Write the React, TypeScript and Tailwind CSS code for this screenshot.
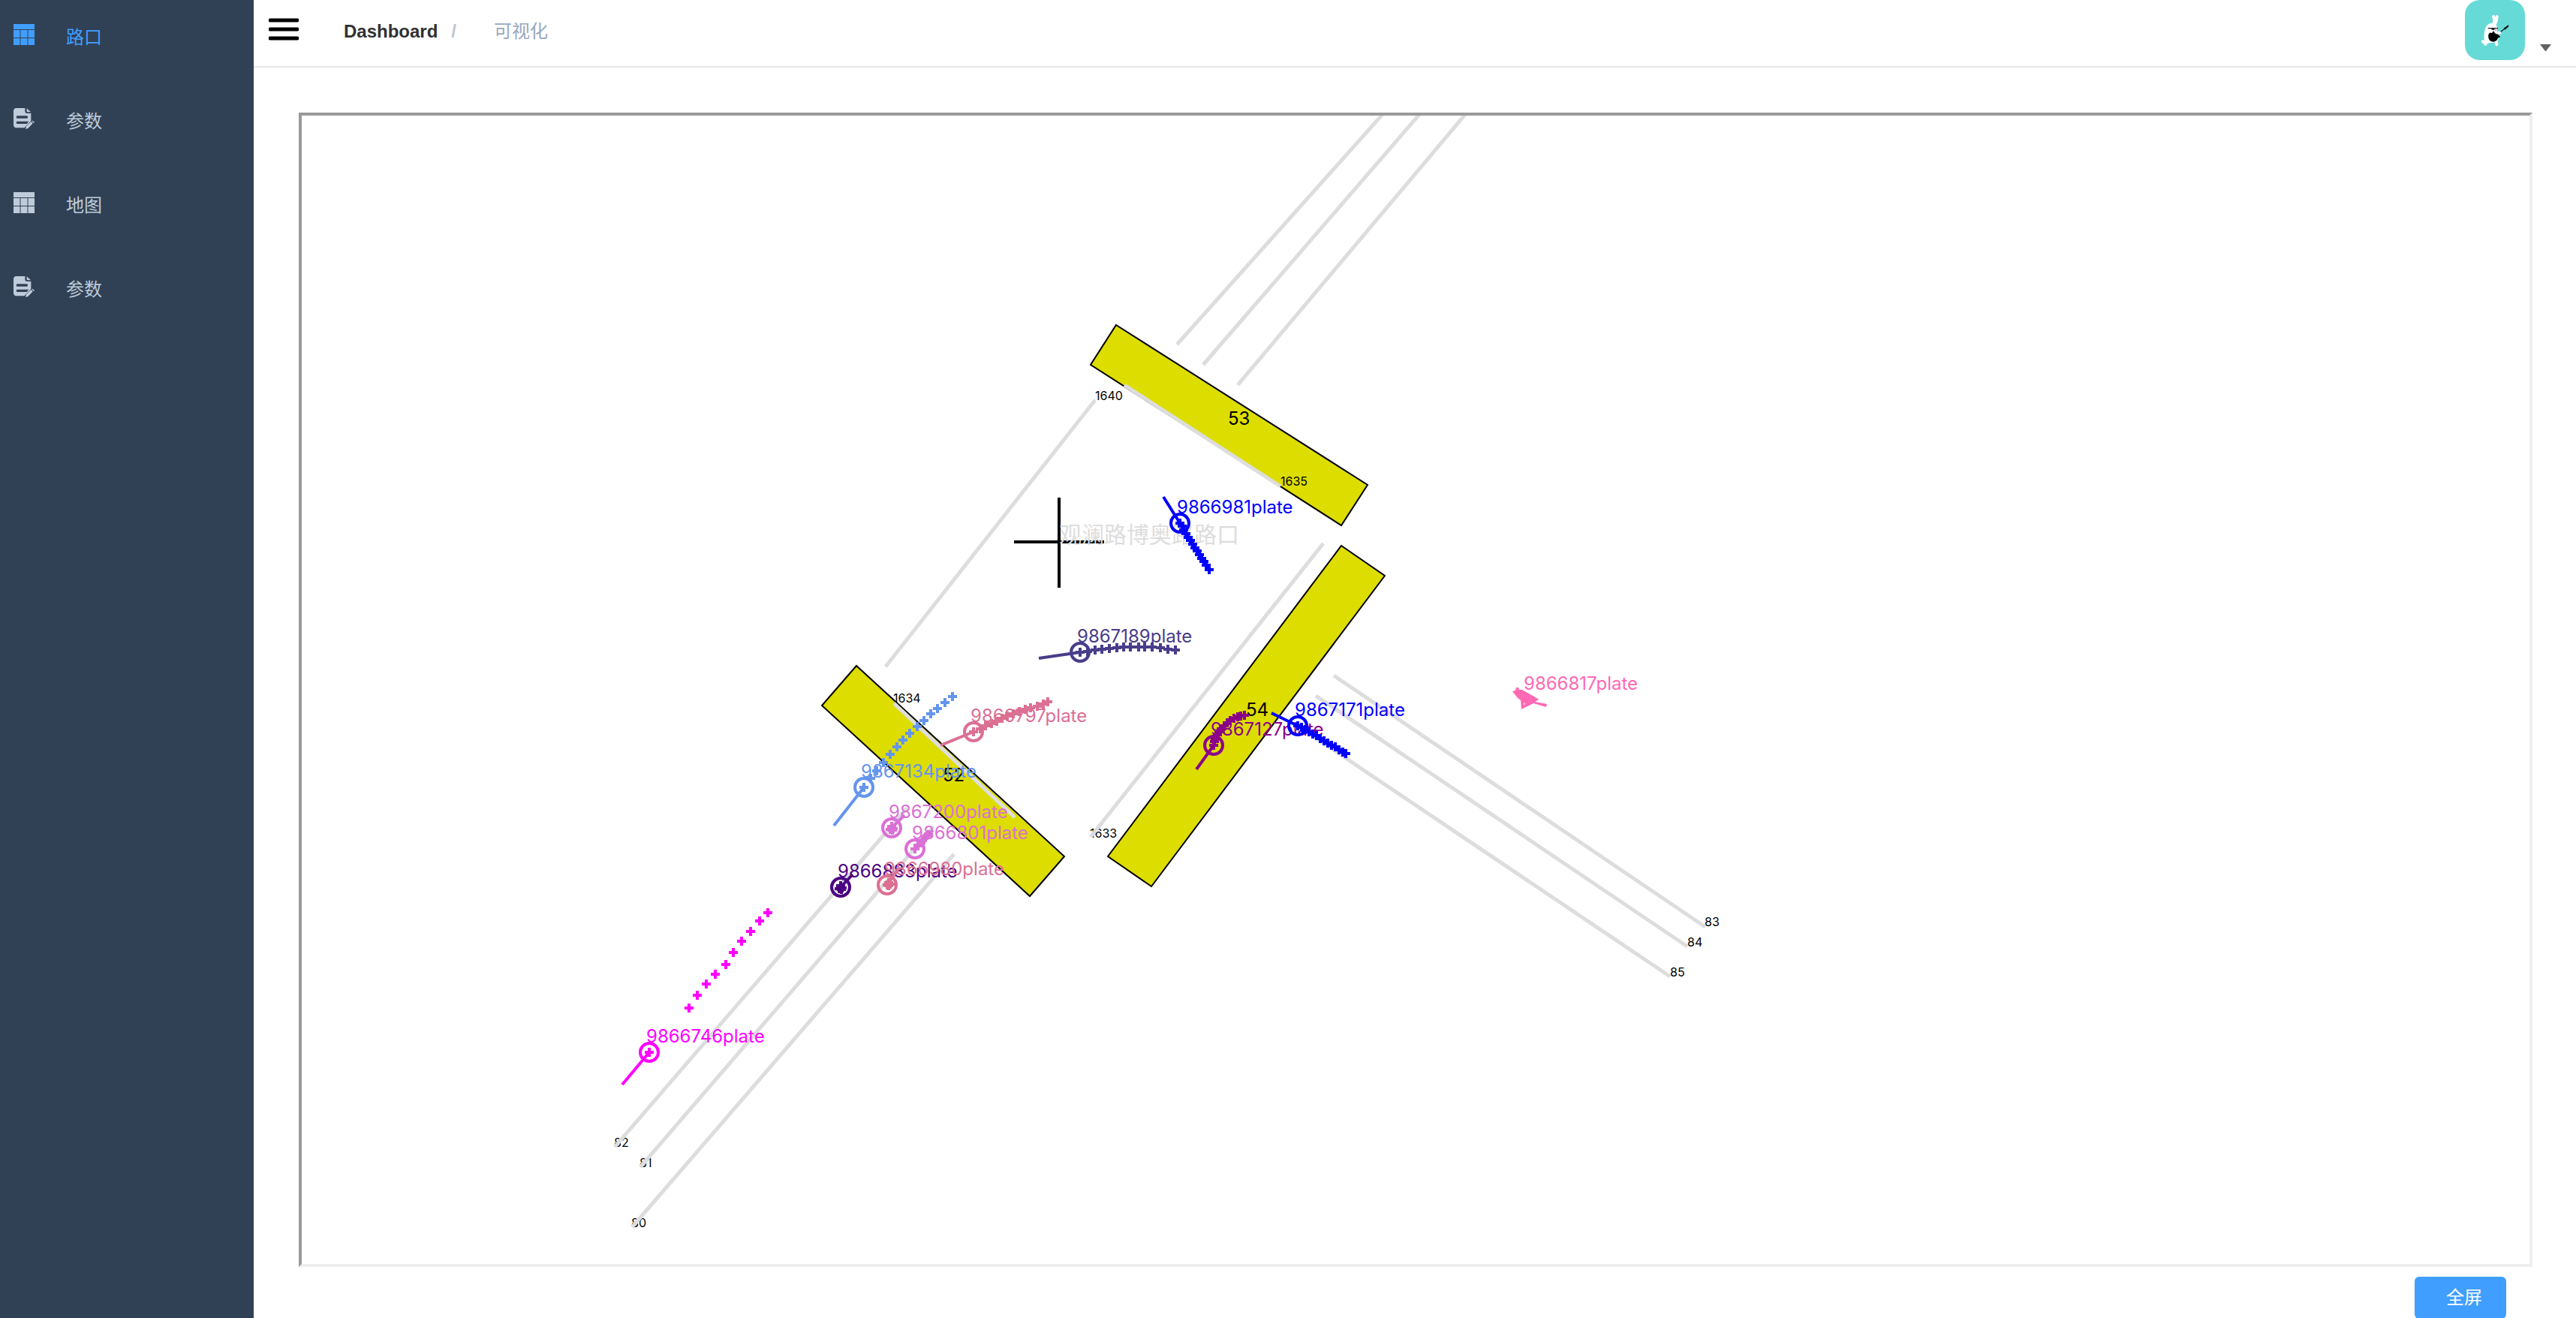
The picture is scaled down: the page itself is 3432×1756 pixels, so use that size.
import React from "react";

type Point = [number, number];

type Vehicle = {
  label: string;
  color: string;
  at: Point;
  heading?: Point;
  trail: Point[];
};

const CJK = "font-['Liberation_Sans','Noto_Sans_CJK_SC',sans-serif]";

const stopLines: { name: string; points: string; label: Point }[] = [
  { name: "53", points: "1487,433 1822,646 1787,700 1453,486", label: [1636, 566] },
  { name: "54", points: "1787,727 1845,767 1534,1181 1476,1141", label: [1660, 954] },
  { name: "52", points: "1141,887 1418,1141 1372,1194 1095,940", label: [1256, 1041] },
];

const lanes: [number, number, number, number][] = [
  [1568, 459, 1845, 149],
  [1603, 486, 1894, 149],
  [1649, 513, 1955, 149],
  [1498, 513, 1706, 648],
  [1459, 533, 1180, 888],
  [1763, 724, 1453, 1115],
  [1191, 937, 1352, 1089],
  [1777, 900, 2272, 1235],
  [1753, 927, 2248, 1261],
  [1729, 967, 2225, 1301],
  [819, 1528, 1208, 1077],
  [853, 1555, 1244, 1101],
  [842, 1635, 1271, 1138],
];

const laneLabels: [string, number, number][] = [
  ["1640", 1459, 533],
  ["1635", 1706, 647],
  ["1634", 1190, 936],
  ["1633", 1452, 1116],
  ["82", 818, 1528],
  ["81", 852, 1555],
  ["80", 841, 1635],
  ["83", 2271, 1234],
  ["84", 2248, 1261],
  ["85", 2225, 1301],
];

const vehicles: Vehicle[] = [
  {
    label: "9866746plate",
    color: "#ff00ff",
    at: [865, 1402],
    heading: [829, 1445],
    trail: [[865, 1402], [918, 1343], [929, 1326], [941, 1311], [953, 1298], [967, 1285], [977, 1269], [988, 1254], [1000, 1241], [1012, 1227], [1023, 1216]],
  },
  {
    label: "9866981plate",
    color: "#0000ff",
    at: [1572, 697],
    heading: [1550, 662],
    trail: [[1572, 697], [1575, 701], [1577, 706], [1580, 711], [1583, 716], [1586, 720], [1589, 725], [1592, 730], [1595, 734], [1598, 739], [1601, 744], [1604, 748], [1607, 753], [1611, 759]],
  },
  {
    label: "9867189plate",
    color: "#483d8b",
    at: [1439, 869],
    heading: [1384, 877],
    trail: [[1439, 869], [1449, 868], [1459, 866], [1468, 865], [1478, 864], [1488, 863], [1497, 862], [1506, 862], [1517, 862], [1525, 862], [1535, 862], [1546, 863], [1556, 865], [1566, 866]],
  },
  {
    label: "9866797plate",
    color: "#db7093",
    at: [1297, 975],
    heading: [1253, 993],
    trail: [[1297, 975], [1306, 971], [1313, 967], [1321, 964], [1328, 961], [1335, 957], [1342, 954], [1350, 951], [1358, 948], [1366, 945], [1373, 943], [1382, 941], [1390, 938], [1396, 935]],
  },
  {
    label: "9867134plate",
    color: "#6495ed",
    at: [1151, 1049],
    heading: [1111, 1100],
    trail: [[1151, 1049], [1160, 1037], [1168, 1027], [1177, 1016], [1186, 1005], [1195, 995], [1203, 986], [1212, 977], [1222, 968], [1231, 960], [1240, 951], [1249, 944], [1259, 936], [1269, 928]],
  },
  {
    label: "9867200plate",
    color: "#da70d6",
    at: [1188, 1103],
    heading: [1205, 1086],
    trail: [[1188, 1103], [1186, 1105], [1190, 1104], [1188, 1101], [1189, 1106]],
  },
  {
    label: "9866801plate",
    color: "#da70d6",
    at: [1219, 1131],
    heading: [1243, 1106],
    trail: [[1219, 1131], [1223, 1126], [1227, 1123], [1229, 1120], [1233, 1115], [1235, 1113], [1237, 1112]],
  },
  {
    label: "9866883plate",
    color: "#4b0082",
    at: [1120, 1182],
    heading: [1136, 1165],
    trail: [[1120, 1182], [1118, 1184], [1122, 1183], [1120, 1180], [1121, 1185]],
  },
  {
    label: "9866980plate",
    color: "#db7093",
    at: [1182, 1179],
    heading: [1197, 1157],
    trail: [[1182, 1179], [1184, 1180], [1186, 1178], [1184, 1176]],
  },
  {
    label: "9867127plate",
    color: "#8b008b",
    at: [1617, 993],
    heading: [1594, 1025],
    trail: [[1617, 993], [1618, 988], [1619, 984], [1622, 979], [1624, 975], [1627, 971], [1631, 967], [1635, 963], [1639, 960], [1644, 957], [1649, 955], [1653, 954], [1658, 953]],
  },
  {
    label: "9867171plate",
    color: "#0000ff",
    at: [1729, 967],
    heading: [1694, 950],
    trail: [[1729, 967], [1734, 969], [1739, 972], [1744, 975], [1749, 978], [1754, 980], [1759, 984], [1764, 987], [1769, 990], [1774, 993], [1779, 995], [1784, 999], [1789, 1002], [1793, 1004]],
  },
];

function VehicleMark({ label, color, at, heading, trail }: Vehicle) {
  const [x, y] = at;
  return (
    <g stroke={color} fill="none" strokeWidth={4}>
      {heading && <line x1={x} y1={y} x2={heading[0]} y2={heading[1]} />}
      {trail.map(([tx, ty], i) => (
        <path key={i} d={`M${tx - 6} ${ty}h12M${tx} ${ty - 6}v12`} />
      ))}
      <circle cx={x} cy={y} r={12} />
      <text x={x - 4} y={y - 13} fill={color} stroke="none" className="text-[24px]">
        {label}
      </text>
    </g>
  );
}

function IntersectionMap() {
  return (
    <svg
      viewBox="402 154 2968 1530"
      className="block h-full w-full font-['Inter','Noto_Sans_CJK_SC',sans-serif]"
      role="img"
      aria-label="观澜路博奥路路口"
    >
      {stopLines.map((s) => (
        <g key={s.name}>
          <polygon points={s.points} fill="#dddd00" stroke="#000" strokeWidth={2} />
          <text x={s.label[0]} y={s.label[1]} className="text-[24px]">
            {s.name}
          </text>
        </g>
      ))}
      {laneLabels.map(([name, x, y]) => (
        <text key={name} x={x} y={y} className="text-[16px]">
          {name}
        </text>
      ))}
      <g stroke="#dddddd" strokeWidth={5}>
        {lanes.map(([x1, y1, x2, y2], i) => (
          <line key={i} x1={x1} y1={y1} x2={x2} y2={y2} />
        ))}
      </g>
      <path d="M1351 722H1471M1411 663V783" stroke="#000" strokeWidth={4} />
      <text x={1411} y={723} fill="#dddddd" className="text-[30px]">
        观澜路博奥路路口
      </text>
      {vehicles.map((v) => (
        <VehicleMark key={v.label} {...v} />
      ))}
      <g fill="#ff69b4">
        <path
          fillRule="evenodd"
          d="M2015 921L2019 920L2020 916L2023 916L2024 919L2028 919L2049 931L2050 932L2045 935L2061 938L2060 942L2043 937L2027 945L2026 933L2022 930ZM2030 936L2030 939L2032 938Z"
        />
        <text x={2030} y={919} className="text-[24px]">
          9866817plate
        </text>
      </g>
    </svg>
  );
}

function GridIcon() {
  return (
    <svg viewBox="0 0 28 28" className="size-7 shrink-0" fill="currentColor" aria-hidden="true">
      <path d="M0 0h28v7H0zM0 8h8v10H0zM10 8h8v10h-8zM20 8h8v10h-8zM0 19h8v9H0zM10 19h8v9h-8zM20 19h8v9h-8z" />
      <path d="M8 8h2v10H8zM18 8h2v10h-2zM8 19h2v9H8zM18 19h2v9h-2z" opacity="0.5" />
    </svg>
  );
}

function FormIcon() {
  return (
    <svg viewBox="0 0 84 84" className="size-7 shrink-0" fill="currentColor" aria-hidden="true">
      <path
        fillRule="evenodd"
        d="M12 0H46V12Q46 21 55 21H70V51L46 76L44 79H12Q0 79 0 67V12Q0 0 12 0ZM15 31Q11 31 11 36Q11 41 15 41H53Q57 41 57 36Q57 31 53 31ZM15 53Q11 53 11 58Q11 63 15 63H53L61 53Z"
      />
      <path d="M53 1L69 16H57Q53 16 53 12ZM48 84L51 72L70 54L77 61L59 80ZM73 52L76 50L84 56L80 60Z" />
    </svg>
  );
}

const menu = [
  { label: "路口", Icon: GridIcon, active: true },
  { label: "参数", Icon: FormIcon, active: false },
  { label: "地图", Icon: GridIcon, active: false },
  { label: "参数", Icon: FormIcon, active: false },
];

function Sidebar() {
  return (
    <nav className="w-[338px] shrink-0 bg-[#304156]">
      <ul>
        {menu.map(({ label, Icon, active }, i) => (
          <li key={i} className="h-28">
            <a
              href="#"
              aria-current={active ? "page" : undefined}
              className={
                active
                  ? "flex h-full items-start gap-[42px] pt-8 pl-[18px] text-[#409eff]"
                  : "flex h-full items-start gap-[42px] pt-8 pl-[18px] text-[#bfcbd9]"
              }
            >
              <Icon />
              <span className="text-2xl leading-9">{label}</span>
            </a>
          </li>
        ))}
      </ul>
    </nav>
  );
}

function Avatar() {
  return (
    <svg viewBox="0 0 240 240" className="size-20 rounded-[20px] bg-[#66dad6]" aria-hidden="true">
      <g fill="none" stroke="#fff" strokeLinecap="round">
        <path d="M114 66Q120 80 116 94M128 66Q128 84 118 98" strokeWidth="12" />
        <path d="M86 168L82 177M124 164L127 178" strokeWidth="12" />
      </g>
      <path fill="#fff" d="M82 112Q88 94 108 92L126 100Q132 112 128 126L134 160Q120 172 98 172L84 176Q64 176 66 164Q70 157 78 162Q74 140 82 112Z" />
      <path d="M92 111H132V115H92ZM105 115H120Q118 121 112 121Q107 120 105 115Z" fill="#222" />
      <circle cx="123" cy="119" r="4" fill="#f5a9c8" />
      <path d="M96 134Q102 128 108 132L114 124L122 134L132 138L142 147L132 152Q128 166 112 167Q96 165 94 150Q92 140 96 134Z" fill="#000" />
      <path d="M130 138L160 113" stroke="#222" strokeWidth="4" />
      <path d="M156 112L174 100L175 106L160 119Z" fill="#111" />
      <ellipse cx="136" cy="131" rx="9" ry="6" fill="#fff" />
    </svg>
  );
}

function Header() {
  return (
    <header className="flex h-[90px] shrink-0 items-start border-b-2 border-[#e6e6e6] pl-5">
      <button type="button" aria-label="Toggle sidebar" className="mt-6">
        <svg viewBox="0 0 40 30" className="block h-[30px] w-10" aria-hidden="true">
          <path d="M2 3H38M2 15H38M2 27H38" stroke="#000" strokeWidth="5" strokeLinecap="round" />
        </svg>
      </button>
      <nav aria-label="Breadcrumb" className="mt-[26px] ml-[60px] flex text-2xl leading-8">
        <a href="#" className="font-bold text-[#303133]">
          Dashboard
        </a>
        <span className="mx-[18px] font-bold text-[#c0c4cc]">/</span>
        <span className="ml-8 text-[#97a8be]">可视化</span>
      </nav>
      <button type="button" aria-label="User menu" className="mr-[33px] ml-auto flex items-end gap-5">
        <Avatar />
        <svg viewBox="0 0 15 9" className="mb-3 h-[9px] w-[15px]" aria-hidden="true">
          <path d="M0 0H15L8 9H7Z" fill="#606266" />
        </svg>
      </button>
    </header>
  );
}

export default function App() {
  return (
    <div className={`flex h-screen overflow-hidden bg-white ${CJK}`}>
      <Sidebar />
      <div className="flex min-w-0 flex-1 flex-col">
        <Header />
        <main className="flex min-h-0 flex-1 flex-col pt-[60px] pr-[58px] pl-[60px]">
          <section className="min-h-0 flex-1 border-4 border-t-[#9a9a9a] border-r-[#eeeeee] border-b-[#eeeeee] border-l-[#9a9a9a]">
            <IntersectionMap />
          </section>
          <div className="mt-[13px] flex h-[55px] shrink-0 justify-end pr-[35px]">
            <button
              type="button"
              className="h-14 w-[122px] rounded-md bg-[#409eff] pl-[10px] text-2xl text-white"
            >
              全屏
            </button>
          </div>
        </main>
      </div>
    </div>
  );
}
